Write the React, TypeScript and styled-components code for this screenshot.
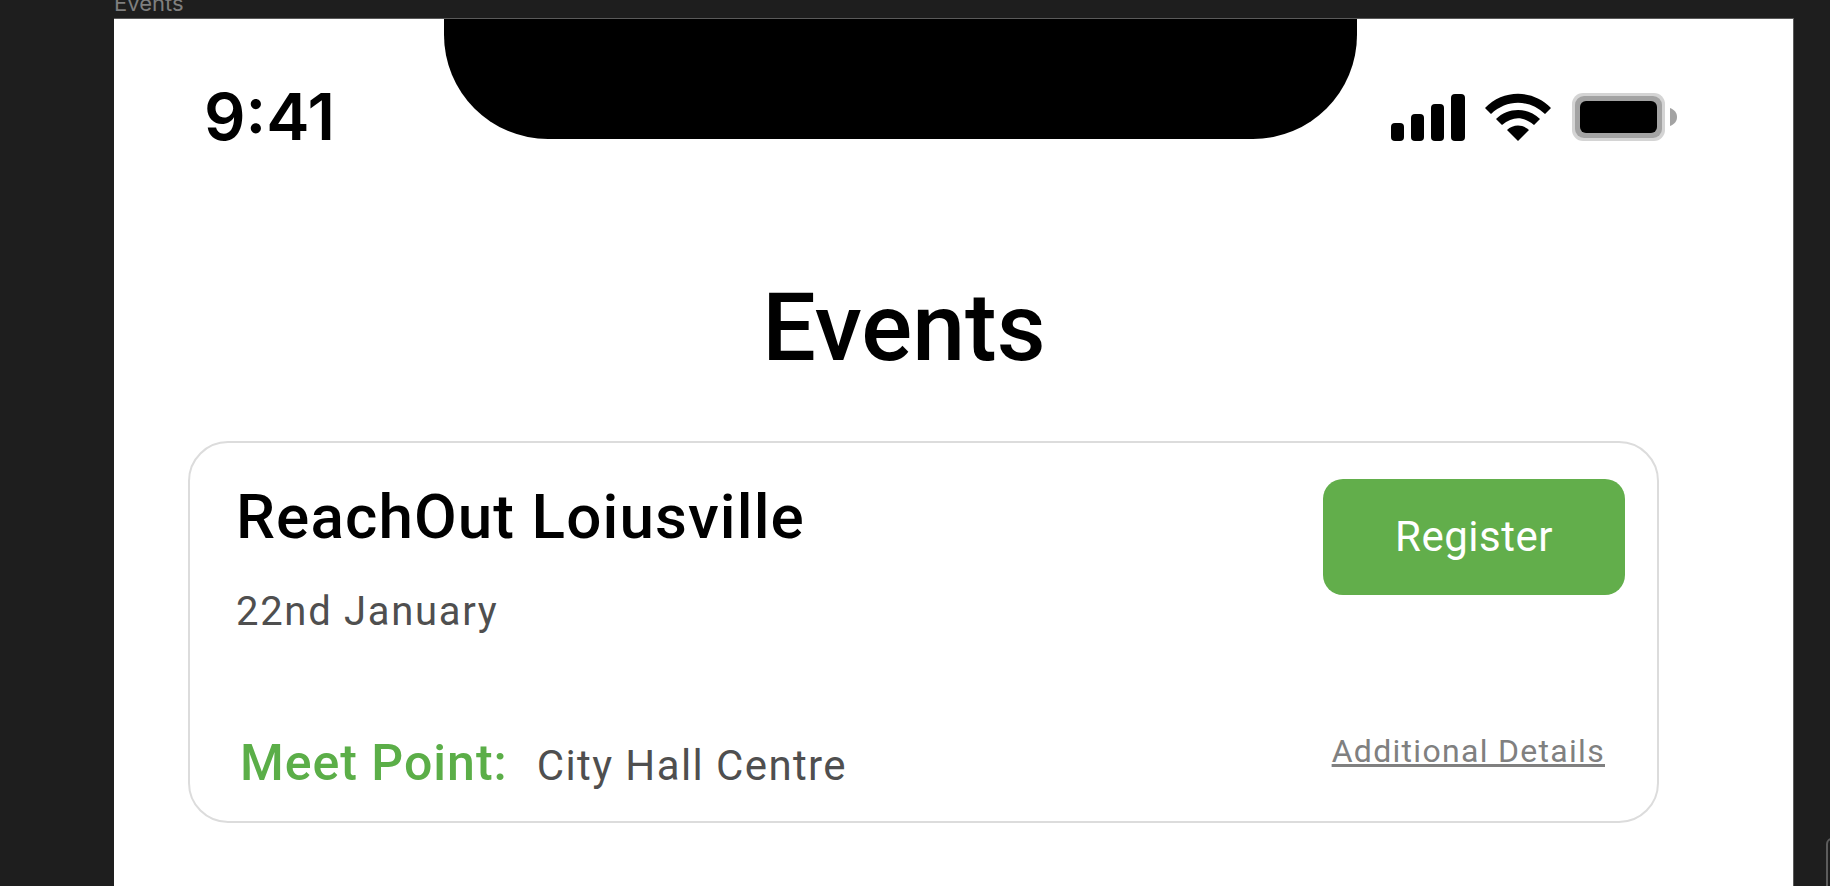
import React from 'react'
import styled, { createGlobalStyle } from 'styled-components'

const Global = createGlobalStyle`
  html, body {
    margin: 0;
    height: 100%;
    background: #1e1e1e;
    overflow: hidden;
  }
  * { box-sizing: border-box; }
`

const brandFont = `Roboto, "Open Sans", sans-serif`

const Canvas = styled.div`
  position: relative;
  width: 1830px;
  height: 886px;
  padding: 0 36px 0 114px;
  display: flex;
  flex-direction: column;
  overflow: hidden;
  background: #1e1e1e;
`
const FrameLabel = styled.div`
  height: 18px;
  flex: none;
  font: 400 22px/1 Inter, sans-serif;
  color: #7f7f7f;
  margin-top: -8px;
  margin-bottom: 8px;
`
const Screen = styled.div`
  flex: 1;
  background: #fff;
  display: flex;
  flex-direction: column;
  border-top: 1px solid #5a5a5a;
  border-right: 1px solid #5a5a5a;
`
const SidePanelEdge = styled.div`
  position: absolute;
  right: -8px;
  top: 838px;
  width: 12px;
  height: 60px;
  border: 2px solid #5c5c5c;
  border-radius: 6px;
`
const StatusBar = styled.div`
  height: 120px;
  flex: none;
  display: grid;
  grid-template-columns: 330px 913px 1fr;
`
const Time = styled.div`
  padding: 65px 0 0 90px;
  font: 600 65px/1 Inter, sans-serif;
  color: #000;
`
const Notch = styled.div`
  height: 120px;
  background: #000;
  border-radius: 0 0 104px 104px;
`
const StatusIcons = styled.div`
  display: flex;
  align-items: center;
  height: 123px;
  padding: 73px 0 0 34px;
  gap: 20px;
`
const Title = styled.h1`
  margin: 0;
  padding: 141px 99px 0 0;
  text-align: center;
  font: 500 95px/1 ${brandFont};
  color: #000;
`
const Card = styled.div`
  margin: 66px 134px 0 74px;
  height: 382px;
  border: 2px solid #dcdcdc;
  border-radius: 40px;
  background: #fff;
  display: flex;
  flex-direction: column;
  justify-content: space-between;
  padding: 36px 32px 33px 46px;
`
const Row = styled.div`
  display: flex;
  justify-content: space-between;
  align-items: flex-start;
`
const EventName = styled.div`
  margin-top: 7px;
  font: 500 62px/1 ${brandFont};
  letter-spacing: 1.1px;
  color: #000;
`
const EventDate = styled.div`
  margin-top: 44px;
  font: 400 40px/1 ${brandFont};
  letter-spacing: 1.7px;
  color: #4f4f4f;
`
const RegisterButton = styled.button`
  width: 302px;
  height: 116px;
  border: none;
  border-radius: 20px;
  background: #62ae4b;
  color: #fff;
  font: 400 42px/1 ${brandFont};
  letter-spacing: 0.5px;
`
const MeetPoint = styled.div`
  display: flex;
  align-items: baseline;
  gap: 29px;
  padding-left: 4px;
`
const MeetLabel = styled.span`
  font: 500 50px/1 ${brandFont};
  letter-spacing: 1px;
  color: #5bae48;
`
const MeetPlace = styled.span`
  font: 400 42px/1 ${brandFont};
  letter-spacing: 1.4px;
  color: #4f4f4f;
`
const DetailsLink = styled.a`
  margin: -3px 20px 0 0;
  font: 400 32px/1 ${brandFont};
  letter-spacing: 1.3px;
  color: #808080;
  text-decoration: underline;
`

function Signal() {
  return (
    <svg width="74" height="47" viewBox="0 0 74 47">
      <rect x="0" y="29" width="13" height="18" rx="4" />
      <rect x="20" y="20" width="13" height="27" rx="4" />
      <rect x="40" y="10" width="13" height="37" rx="4" />
      <rect x="60" y="0" width="14" height="47" rx="4" />
    </svg>
  )
}

function Wifi() {
  return (
    <svg width="66" height="48" viewBox="0 0 66 48">
      <path d="M0 15 C18 -4 48 -4 66 15 L60 21 C44 6 22 6 6 21 Z" />
      <path d="M11 26 C23 14 43 14 55 26 L49 32 C38 23 28 23 17 32 Z" />
      <path d="M22 37 C28 31 38 31 44 37 L33 48 Z" />
    </svg>
  )
}

function Battery() {
  return (
    <svg width="106" height="50" viewBox="0 0 106 50">
      <rect x="1" y="1" width="93" height="48" rx="11" fill="#d4d4d4" />
      <rect x="4" y="4" width="87" height="42" rx="9" fill="#a3a3a3" />
      <rect x="9" y="9" width="77" height="32" rx="6" fill="#000" />
      <path d="M99 16 C104 18 106 21 106 25 C106 29 104 32 99 34 Z" fill="#a3a3a3" />
    </svg>
  )
}

export default function App() {
  return (
    <Canvas>
      <Global />
      <FrameLabel>Events</FrameLabel>
      <Screen>
        <StatusBar>
          <Time>9:41</Time>
          <Notch />
          <StatusIcons>
            <Signal />
            <Wifi />
            <Battery />
          </StatusIcons>
        </StatusBar>
        <Title>Events</Title>
        <Card>
          <Row>
            <div>
              <EventName>ReachOut Loiusville</EventName>
              <EventDate>22nd January</EventDate>
            </div>
            <RegisterButton>Register</RegisterButton>
          </Row>
          <Row>
            <MeetPoint>
              <MeetLabel>Meet Point:</MeetLabel>
              <MeetPlace>City Hall Centre</MeetPlace>
            </MeetPoint>
            <DetailsLink>Additional Details</DetailsLink>
          </Row>
        </Card>
      </Screen>
      <SidePanelEdge />
    </Canvas>
  )
}
